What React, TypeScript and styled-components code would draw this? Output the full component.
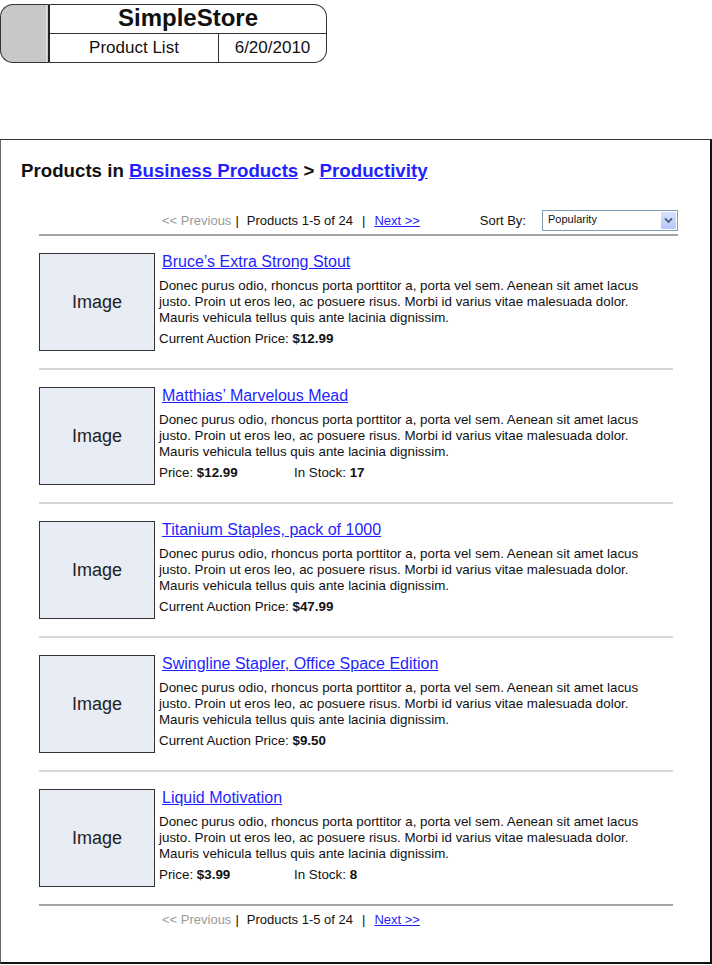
import React from 'react';
import styled, { createGlobalStyle } from 'styled-components';

const GlobalStyle = createGlobalStyle`
  body {
    margin: 0;
    background: #fff;
    font-family: "Liberation Sans", Arial, sans-serif;
    color: #111;
  }
`;

const Page = styled.div`
  width: 712px;
  padding-top: 4px;
`;

const Header = styled.div`
  display: flex;
  width: 327px;
  height: 59px;
`;

const Tab = styled.div`
  width: 48px;
  box-sizing: border-box;
  border: 1px solid #333;
  border-right: none;
  border-radius: 13px 0 0 13px;
  background-color: #c8c8c8;
  background-image: repeating-linear-gradient(
    to bottom,
    #fff 0 1px,
    #c8c8c8 1px 2px
  );
  background-size: 1px 100%;
  background-position: 45px 0;
  background-repeat: no-repeat;
`;

const HeaderBody = styled.div`
  flex: 1;
  display: flex;
  flex-direction: column;
  border: 1px solid #333;
  border-left: 2px solid #222;
  border-radius: 0 13px 13px 0;
`;

const HeaderTitle = styled.div`
  height: 28px;
  line-height: 25px;
  text-align: center;
  font-size: 24px;
  font-weight: bold;
  border-bottom: 1px solid #333;
`;

const HeaderRow = styled.div`
  flex: 1;
  display: flex;
`;

const HeaderCell = styled.div<{ $width?: number }>`
  ${p => (p.$width ? `width: ${p.$width}px;` : 'flex: 1;')}
  display: flex;
  align-items: center;
  justify-content: center;
  font-size: 17px;
  & + & {
    border-left: 1px solid #333;
  }
`;

const Frame = styled.div`
  margin-top: 76px;
  box-sizing: border-box;
  width: 712px;
  border-top: 1px solid #333;
  border-left: 1px solid #666;
  border-right: 2px solid #111;
  border-bottom: 2px solid #111;
  padding: 20px 0 30px;
`;

const Heading = styled.h1`
  margin: 0 0 0 20px;
  font-size: 18.7px;
  line-height: 22px;
  font-weight: bold;
`;

const CrumbLink = styled.a`
  color: #1f1fff;
  text-decoration: underline;
`;

const Content = styled.div`
  margin-left: 38px;
`;

const PagerBar = styled.div<{ $bottom?: boolean }>`
  display: flex;
  align-items: center;
  white-space: nowrap;
  width: ${p => (p.$bottom ? 634 : 639)}px;
  height: ${p => (p.$bottom ? 26 : 29)}px;
  margin-top: ${p => (p.$bottom ? 0 : 25)}px;
  padding-left: 123px;
  box-sizing: border-box;
  font-size: 13px;
  ${p => !p.$bottom && 'border-bottom: 2px solid #a4a4a4;'}
`;

const Prev = styled.span`
  color: #9a9a9a;
`;

const Sep = styled.span<{ $left: number; $right: number }>`
  margin: 0 ${p => p.$right}px 0 ${p => p.$left}px;
`;

const NextLink = styled.a`
  color: #1f1fff;
  text-decoration: underline;
`;

const SortGroup = styled.div`
  margin-left: auto;
  display: flex;
  align-items: center;
  gap: 16px;
`;

const Select = styled.div`
  display: flex;
  align-items: center;
  width: 136px;
  height: 21px;
  box-sizing: border-box;
  border: 1px solid #7f9db9;
  font-size: 11px;
  padding: 1px 1px 1px 5px;
`;

const SelectValue = styled.span`
  flex: 1;
  margin-top: -3px;
`;

const SelectButton = styled.span`
  display: flex;
  align-items: center;
  justify-content: center;
  width: 15px;
  height: 17px;
  background: linear-gradient(#d6e2fd, #b4c8f6);
  border-radius: 1px;
`;

const Item = styled.div<{ $last?: boolean }>`
  display: flex;
  width: 634px;
  padding: 17px 0 17px;
  border-bottom: 2px solid ${p => (p.$last ? '#a4a4a4' : '#d6d6d6')};
`;

const ImageBox = styled.div`
  width: 116px;
  height: 98px;
  flex-shrink: 0;
  box-sizing: border-box;
  border: 1px solid #333;
  background: #e8ecf5;
  display: flex;
  align-items: center;
  justify-content: center;
  font-size: 18px;
  color: #222;
`;

const Details = styled.div`
  margin-left: 4px;
  width: 500px;
  font-size: 13.35px;
  line-height: 16px;
`;

const Title = styled.a`
  display: inline-block;
  margin: 0 0 0 3px;
  font-size: 16px;
  line-height: 18px;
  color: #1f1fff;
  text-decoration: underline;
`;

const Description = styled.p`
  margin: 7px 0 0;
`;

const PriceLine = styled.div`
  margin-top: 5px;
  display: flex;
`;

const PriceCell = styled.span`
  width: 135px;
`;

type Product = {
  name: string;
  price: string;
  auction?: boolean;
  stock?: number;
};

const products: Product[] = [
  { name: 'Bruce\u2019s Extra Strong Stout', price: '$12.99', auction: true },
  { name: 'Matthias\u2019 Marvelous Mead', price: '$12.99', stock: 17 },
  { name: 'Titanium Staples, pack of 1000', price: '$47.99', auction: true },
  { name: 'Swingline Stapler, Office Space Edition', price: '$9.50', auction: true },
  { name: 'Liquid Motivation', price: '$3.99', stock: 8 },
];

const lorem =
  'Donec purus odio, rhoncus porta porttitor a, porta vel sem. Aenean sit amet lacus justo. Proin ut eros leo, ac posuere risus. Morbi id varius vitae malesuada dolor. Mauris vehicula tellus quis ante lacinia dignissim.';

const Pager: React.FC<{ bottom?: boolean }> = ({ bottom }) => (
  <PagerBar $bottom={bottom}>
    <Prev>&lt;&lt; Previous</Prev>
    <Sep $left={4} $right={8}>|</Sep>
    <span>Products 1-5 of 24</span>
    <Sep $left={9} $right={9}>|</Sep>
    <NextLink href='#'>Next &gt;&gt;</NextLink>
    {!bottom && (
      <SortGroup>
        <span>Sort By:</span>
        <Select>
          <SelectValue>Popularity</SelectValue>
          <SelectButton>
            <svg width='9' height='7' viewBox='0 0 9 7'>
              <path d='M1 1.5 L4.5 5 L8 1.5' fill='none' stroke='#4d6185' strokeWidth='1.8' />
            </svg>
          </SelectButton>
        </Select>
      </SortGroup>
    )}
  </PagerBar>
);

export default function App() {
  return (
    <Page>
      <GlobalStyle />
      <Header>
        <Tab />
        <HeaderBody>
          <HeaderTitle>SimpleStore</HeaderTitle>
          <HeaderRow>
            <HeaderCell $width={168}>Product List</HeaderCell>
            <HeaderCell>6/20/2010</HeaderCell>
          </HeaderRow>
        </HeaderBody>
      </Header>
      <Frame>
        <Heading>
          Products in <CrumbLink href='#'>Business Products</CrumbLink> &gt;{' '}
          <CrumbLink href='#'>Productivity</CrumbLink>
        </Heading>
        <Content>
          <Pager />
          {products.map((p, i) => (
            <Item key={p.name} $last={i === products.length - 1}>
              <ImageBox>Image</ImageBox>
              <Details>
                <Title href='#'>{p.name}</Title>
                <Description>{lorem}</Description>
                <PriceLine>
                  {p.auction ? (
                    <span>
                      Current Auction Price: <b>{p.price}</b>
                    </span>
                  ) : (
                    <>
                      <PriceCell>
                        Price: <b>{p.price}</b>
                      </PriceCell>
                      <span>
                        In Stock: <b>{p.stock}</b>
                      </span>
                    </>
                  )}
                </PriceLine>
              </Details>
            </Item>
          ))}
          <Pager bottom />
        </Content>
      </Frame>
    </Page>
  );
}
